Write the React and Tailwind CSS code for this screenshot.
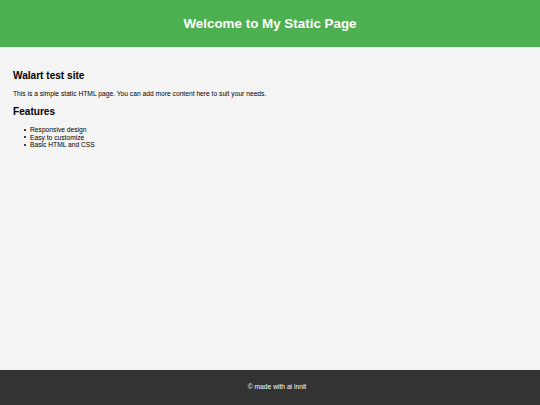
export default function App() {
  return (
    <div
      className="flex min-h-[405px] flex-col bg-[#f4f4f4] text-[#000]"
      style={{ fontFamily: '"Liberation Sans", Arial, sans-serif' }}
    >
      <header className="flex h-[47px] items-center justify-center bg-[#4caf50]">
        <h1 className="text-[13.4px] font-bold leading-[16px] text-white">Welcome to My Static Page</h1>
      </header>

      <main className="flex-1 px-[13px] pt-[23px]">
        <h2 className="text-[10.1px] font-bold leading-[12px]">Walart test site</h2>
        <p className="mt-[8px] text-[6.7px] leading-[8px]">
          This is a simple static HTML page. You can add more content here to suit your needs.
        </p>
        <h2 className="mt-[8px] text-[10.1px] font-bold leading-[12px]">Features</h2>
        <ul className="mt-[8px] pl-[11px] text-[6.7px] leading-[7.5px]">
          <li className="flex items-center">
            <span className="mr-[4px] inline-block h-[2px] w-[2px] rounded-full bg-black" />
            Responsive design
          </li>
          <li className="flex items-center">
            <span className="mr-[4px] inline-block h-[2px] w-[2px] rounded-full bg-black" />
            Easy to customize
          </li>
          <li className="flex items-center">
            <span className="mr-[4px] inline-block h-[2px] w-[2px] rounded-full bg-black" />
            Basic HTML and CSS
          </li>
        </ul>
      </main>

      <footer className="flex h-[35px] items-center justify-center bg-[#333333] pl-[14px]">
        <p className="text-[6.7px] text-white">© made with ai innit</p>
      </footer>
    </div>
  );
}
